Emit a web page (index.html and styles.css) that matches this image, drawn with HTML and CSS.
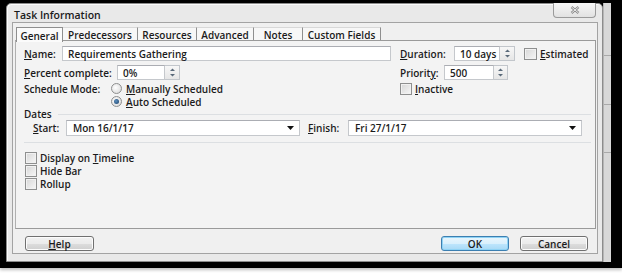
FILE: index.html
```html
<!DOCTYPE html>
<html>
<head>
<meta charset="utf-8">
<link rel="stylesheet" href="styles.css">
</head>
<body>
<div class="screen">
  <div class="window">
    <div class="titlebar">
      <span class="title">Task Information</span>
      <span class="close"><svg width="10" height="8" viewBox="0 0 10 8"><path d="M1.5 1 L8.5 7 M8.5 1 L1.5 7" stroke="#8a8a8a" stroke-width="2.4" fill="none"/><path d="M1.5 1 L8.5 7 M8.5 1 L1.5 7" stroke="#f4f4f4" stroke-width="0.9" fill="none"/></svg></span>
    </div>
    <div class="client">
      <div class="tabs">
        <div class="tab tab-general active">General</div>
        <div class="tab tab-pred">Predecessors</div>
        <div class="tab tab-res">Resources</div>
        <div class="tab tab-adv">Advanced</div>
        <div class="tab tab-notes">Notes</div>
        <div class="tab tab-custom">Custom Fields</div>
      </div>
      <div class="panel">
        <div class="row row1">
          <div class="left">
            <span class="lbl lbl-name"><u>N</u>ame:</span>
            <span class="input in-name">Requirements Gathering</span>
          </div>
          <div class="right">
            <span class="lbl lbl-dur"><u>D</u>uration:</span>
            <span class="input in-dur">10 days</span>
            <span class="spin"><svg width="7" height="11" viewBox="0 0 7 11"><path d="M1 4 L3.5 1.5 L6 4 Z" fill="#5a6a7a"/><path d="M1 7 L3.5 9.5 L6 7 Z" fill="#5a6a7a"/></svg></span>
            <span class="check check-est"></span>
            <span class="txt"><u>E</u>stimated</span>
          </div>
        </div>
        <div class="row row2">
          <div class="left">
            <span class="lbl lbl-pct"><u>P</u>ercent complete:</span>
            <span class="input in-pct">0%</span>
            <span class="spin"><svg width="7" height="11" viewBox="0 0 7 11"><path d="M1 4 L3.5 1.5 L6 4 Z" fill="#5a6a7a"/><path d="M1 7 L3.5 9.5 L6 7 Z" fill="#5a6a7a"/></svg></span>
          </div>
          <div class="right">
            <span class="lbl lbl-pri">Priorit<u>y</u>:</span>
            <span class="input in-pri">500</span>
            <span class="spin spin-narrow"><svg width="7" height="11" viewBox="0 0 7 11"><path d="M1 4 L3.5 1.5 L6 4 Z" fill="#5a6a7a"/><path d="M1 7 L3.5 9.5 L6 7 Z" fill="#5a6a7a"/></svg></span>
          </div>
        </div>
        <div class="row row3">
          <div class="left">
            <span class="lbl lbl-mode">Schedule Mode:</span>
            <span class="radio"></span>
            <span class="txt"><u>M</u>anually Scheduled</span>
          </div>
          <div class="right">
            <span class="check check-inactive"></span>
            <span class="txt"><u>I</u>nactive</span>
          </div>
        </div>
        <div class="row row4">
          <span class="radio checked"></span>
          <span class="txt"><u>A</u>uto Scheduled</span>
        </div>
        <div class="row group">
          <span class="txt">Dates</span>
          <span class="gline"></span>
        </div>
        <div class="row dates">
          <span class="lbl lbl-start"><u>S</u>tart:</span>
          <span class="combo">Mon 16/1/17<svg class="arrow" width="7" height="4" viewBox="0 0 7 4"><path d="M0 0 L7 0 L3.5 4 Z" fill="#111"/></svg></span>
          <span class="lbl lbl-finish"><u>F</u>inish:</span>
          <span class="combo">Fri 27/1/17<svg class="arrow" width="7" height="4" viewBox="0 0 7 4"><path d="M0 0 L7 0 L3.5 4 Z" fill="#111"/></svg></span>
        </div>
        <div class="sep"></div>
        <div class="row crow first">
          <span class="check"></span>
          <span class="txt">Display on <u>T</u>imeline</span>
        </div>
        <div class="row crow">
          <span class="check"></span>
          <span class="txt">Hide Bar</span>
        </div>
        <div class="row crow">
          <span class="check"></span>
          <span class="txt">Rollup</span>
        </div>
      </div>
      <div class="buttons">
        <span class="btn"><u>H</u>elp</span>
        <span class="spacer"></span>
        <span class="btn ok">OK</span>
        <span class="btn cancel">Cancel</span>
      </div>
    </div>
  </div>
  <div class="appbg">
    <div class="appline l1"></div>
    <div class="appline l2"></div>
    <div class="appline l3"></div>
  </div>
</div>
</body>
</html>
```

FILE: styles.css
```css
* { box-sizing: border-box; }
html, body {
  margin: 0;
  padding: 0;
  background: #ffffff;
}
body {
  width: 622px;
  height: 274px;
  overflow: hidden;
  font-family: "Open Sans", "Noto Sans", sans-serif;
  font-size: 10px;
  line-height: 12px;
  font-weight: 600;
  color: #1b1b1b;
}
u { text-decoration: underline; text-underline-offset: 1px; }

.screen {
  height: 268px;
  background: #000;
  padding: 3px 11px 6px 6px;
  display: flex;
  box-shadow: 0 2px 3px rgba(0,0,0,0.25);
}

.window {
  width: 597px;
  background: #e9e9e9;
  border: 1px solid #8c8c8c;
  border-radius: 5px 5px 0 0;
  display: flex;
  flex-direction: column;
  box-shadow: inset 1px 1px 0 #fbfbfb;
}

.titlebar {
  height: 18px;
  display: flex;
  align-items: center;
  padding-left: 7px;
  position: relative;
}
.title {
  font-size: 10.5px;
  font-weight: 600;
  color: #1a1a1a;
  margin-top: 4px;
}
.close {
  position: absolute;
  right: 6px;
  top: -1px;
  width: 43px;
  height: 15px;
  border: 1px solid #9a9a9a;
  border-top: none;
  border-radius: 0 0 4px 4px;
  background: linear-gradient(#f6f6f6, #e2e2e2);
  display: flex;
  align-items: center;
  justify-content: center;
}

.client {
  flex: 1;
  margin: 0 4px 7px 5px;
  border: 1px solid #a3a3a3;
  background: #f0f0f0;
  display: flex;
  flex-direction: column;
  padding: 4px 1px 0 2px;
}

.tabs {
  display: flex;
  height: 14px;
  margin-left: 1px;
}
.tab {
  height: 14px;
  border-right: 1px solid #8f8f8f;
  border-top: 1px solid #d8d8d8;
  background: #f7f7f7;
  display: flex;
  align-items: center;
  justify-content: center;
  padding-top: 1px;
}
.tab.active {
  border: 1px solid #8f8f8f;
  border-bottom: none;
  background: #fbfbfb;
  height: 15px;
  position: relative;
  z-index: 1;
}
.tab-general { width: 47px; }
.tab-pred { width: 75px; }
.tab-res { width: 59px; }
.tab-adv { width: 57px; }
.tab-notes { width: 49px; }
.tab-custom { width: 78px; }

.panel {
  height: 189px;
  margin-top: -1px;
  border: 1px solid #9a9a9a;
  border-left-color: #b0b0b0;
  background: #f3f3f3;
  padding: 5px 4px 0 8px;
  display: flex;
  flex-direction: column;
}

.row {
  display: flex;
  align-items: center;
  white-space: nowrap;
}
.left { display: flex; align-items: center; width: 376px; flex: none; }
.right { display: flex; align-items: center; }

.row1 { height: 15px; }
.row2 { height: 15px; margin-top: 4px; }
.row3 { height: 13px; margin-top: 2px; }
.row4 { height: 13px; padding-left: 87px; }
.group { height: 12px; padding-left: 0; }
.dates { height: 16px; padding-left: 9px; }
.crow { height: 13px; padding-left: 1px; }
.crow.first { margin-top: 8px; }

.lbl { flex: none; }
.lbl-name { width: 38px; }
.lbl-dur { width: 54px; }
.lbl-pct { width: 93px; }
.lbl-pri { width: 44px; }
.lbl-mode { width: 87px; }
.lbl-start { width: 33px; }
.lbl-finish { width: 40px; margin-left: 8px; }

.input {
  height: 15px;
  background: #fff;
  border: 1px solid #c5c8cc;
  border-top-color: #abadb3;
  padding-left: 5px;
  display: flex;
  align-items: center;
  flex: none;
}
.in-name { width: 329px; }
.in-dur { width: 46px; }
.in-pct { width: 48px; }
.in-pri { width: 50px; }

.spin {
  width: 15px;
  height: 15px;
  border: 1px solid #c2c6cb;
  background: linear-gradient(#f7f7f7, #e6e6e6);
  display: flex;
  align-items: center;
  justify-content: center;
  flex: none;
  border-left: none;
}
.spin-narrow { width: 14px; }

.check {
  width: 12px;
  height: 12px;
  border: 1px solid #8e8f8f;
  background: linear-gradient(135deg, #d6d6d6, #f7f7f7);
  box-shadow: inset 0 0 0 1px #f1f1f1;
  flex: none;
  margin-right: 3px;
}
.check-est { margin-left: 9px; width: 13px; }

.radio {
  width: 11px;
  height: 11px;
  border-radius: 50%;
  border: 1px solid #8e8f8f;
  background: radial-gradient(circle at 40% 40%, #ffffff, #d4d4d4);
  flex: none;
  margin-right: 4px;
  display: flex;
  align-items: center;
  justify-content: center;
}
.radio.checked::after {
  content: "";
  width: 5px;
  height: 5px;
  border-radius: 50%;
  background: radial-gradient(circle at 40% 40%, #5b8fbf, #1a3e66);
}

.gline {
  flex: 1;
  height: 1px;
  background: #dcdfe2;
  margin-left: 6px;
}

.combo {
  width: 234px;
  height: 16px;
  background: #fff;
  border: 1px solid #c5c8cc;
  border-top-color: #abadb3;
  padding-left: 6px;
  display: flex;
  align-items: center;
  justify-content: space-between;
  padding-right: 5px;
  flex: none;
}

.sep {
  height: 1px;
  margin-top: 6px;
  background: #dcdfe2;
}

.buttons {
  display: flex;
  align-items: center;
  margin-top: 7px;
  padding: 0 8px 0 10px;
  height: 15px;
}
.spacer { flex: 1; }
.btn {
  width: 69px;
  height: 15px;
  border: 1px solid #707070;
  border-radius: 3px;
  background: linear-gradient(#f2f2f2 0%, #ebebeb 50%, #dddddd 51%, #cfcfcf 100%);
  box-shadow: inset 0 0 0 1px #fcfcfc;
  display: flex;
  align-items: center;
  justify-content: center;
  flex: none;
}
.btn.ok {
  width: 68px;
  border-color: #3c7fb1;
  background: linear-gradient(#eaf6fd 0%, #d9f0fc 50%, #bee6fd 51%, #a7d9f5 100%);
  box-shadow: inset 0 0 0 1px #8fd3f5;
}
.btn.cancel { width: 68px; margin-left: 11px; }

.appbg {
  flex: 1;
  background: #d8d8d8;
  margin-right: 0;
  position: relative;
  border-left: 1px solid #b5b5b5;
}
.appline {
  height: 1px;
  background: #a9a9a9;
}
.appline.l1 { margin-top: 52px; }
.appline.l2 { margin-top: 48px; }
.appline.l3 { margin-top: 47px; }
```
